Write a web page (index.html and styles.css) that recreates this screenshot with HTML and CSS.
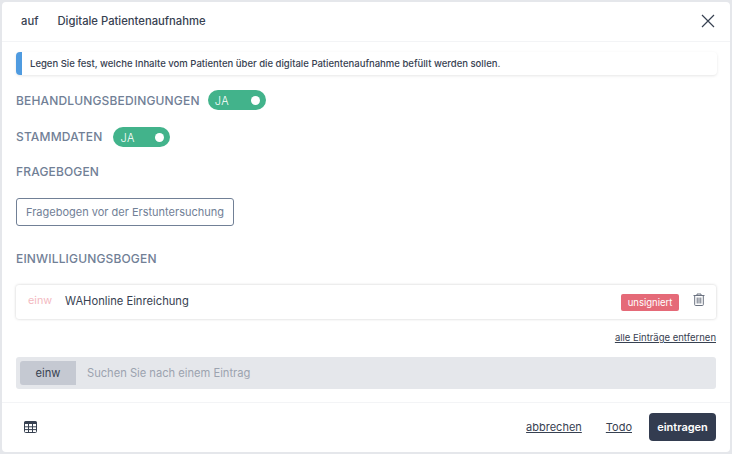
FILE: index.html
```html
<!DOCTYPE html>
<html lang="de">
<head>
<meta charset="utf-8">
<title>Digitale Patientenaufnahme</title>
<link rel="stylesheet" href="styles.css">
</head>
<body>
<div class="modal">
  <header class="head">
    <span class="head-code">auf</span>
    <span class="head-title">Digitale Patientenaufnahme</span>
    <svg class="close" width="14" height="14" viewBox="0 0 14 14"><path d="M1 1l12 12M13 1L1 13" stroke="#374151" stroke-width="1.2" fill="none"/></svg>
  </header>
  <main class="body">
    <div class="notice">Legen Sie fest, welche Inhalte vom Patienten über die digitale Patientenaufnahme befüllt werden sollen.</div>
    <div class="row row-first"><span class="label">BEHANDLUNGSBEDINGUNGEN</span><span class="toggle toggle-wide">JA<i class="knob"></i></span></div>
    <div class="row row-second"><span class="label">STAMMDATEN</span><span class="toggle toggle-narrow">JA<i class="knob"></i></span></div>
    <div class="row row-third"><span class="label">FRAGEBOGEN</span></div>
    <button class="outline">Fragebogen vor der Erstuntersuchung</button>
    <div class="row row-fourth"><span class="label">EINWILLIGUNGSBOGEN</span></div>
    <div class="entry">
      <span class="entry-code">einw</span>
      <span class="entry-name">WAHonline Einreichung</span>
      <span class="badge">unsigniert</span>
      <svg class="trash" width="12" height="13" viewBox="0 0 12 13" fill="none" stroke="#6b7280" stroke-width="1"><path d="M.5 2.5h11M4 2.5V1h4v1.5M1.7 2.5v9.2c0 .5.3.8.8.8h7c.5 0 .8-.3.8-.8V2.5M4.2 4.5v6M6 4.5v6M7.8 4.5v6"/></svg>
    </div>
    <div class="remove-wrap"><a class="remove" href="#">alle Einträge entfernen</a></div>
    <div class="search"><span class="search-tag">einw</span><span class="search-hint">Suchen Sie nach einem Eintrag</span></div>
  </main>
  <footer class="foot">
    <svg class="table-icon" width="13" height="12" viewBox="0 0 13 12"><path d="M1.5 0h10A1.5 1.5 0 0 1 13 1.5V3H0V1.5A1.5 1.5 0 0 1 1.5 0z" fill="#374151"/><path d="M.5 3v7.5a1 1 0 0 0 1 1h10a1 1 0 0 0 1-1V3M0 5.8h13M0 8.6h13M4.5 3v8.5M8.5 3v8.5" fill="none" stroke="#374151"/></svg>
    <span class="spacer"></span>
    <a class="link" href="#">abbrechen</a>
    <a class="link link-todo" href="#">Todo</a>
    <button class="primary">eintragen</button>
  </footer>
</div>
</body>
</html>
```
FILE: styles.css
```css
* { box-sizing: border-box; }
html, body { margin: 0; height: 100%; }
body {
  background: #e5e7eb;
  padding: 2px;
  font-family: Inter, "Noto Sans", sans-serif;
  color: #374151;
}
.modal {
  width: 728px;
  height: 450px;
  background: #fff;
  border-radius: 4px;
  display: flex;
  flex-direction: column;
}
.head {
  height: 40px;
  flex: none;
  display: flex;
  align-items: center;
  padding: 0 15px 1px 19px;
  border-bottom: 1px solid #f3f4f6;
  font-size: 11.25px;
  font-weight: 500;
}
.head-code { width: 36.5px; }
.head-title { flex: 1; }
.body { flex: 1; padding: 10px 14px 0; }
.notice {
  height: 23px;
  width: 701px;
  border-left: 6px solid #4f9be0;
  border-radius: 4px;
  box-shadow: 0 1px 3px rgba(0,0,0,.1);
  padding-left: 8px;
  line-height: 23px;
  font-size: 9.52px;
  font-weight: 500;
}
.row { display: flex; align-items: center; gap: 8px; }
.row-first { margin-top: 15px; height: 20px; }
.row-second { margin-top: 16px; height: 20px; }
.row-third { margin-top: 15px; height: 20px; }
.row-fourth { margin-top: 22px; height: 20px; }
.label { font-size: 12px; font-weight: 500; color: #718096; letter-spacing: .16px; }
.toggle {
  position: relative;
  width: 58px;
  height: 20px;
  border-radius: 10px;
  background: #42b38b;
  color: #fff;
  font-size: 11px;
  font-weight: 300;
  line-height: 22px;
  padding-left: 7px;
  letter-spacing: .6px;
}
.toggle-narrow { width: 57px; margin: 2px 0 0 3px; }
.knob {
  position: absolute;
  right: 6px;
  top: 6px;
  width: 9px;
  height: 9px;
  border-radius: 50%;
  background: #fff;
}
.outline {
  display: block;
  margin-top: 17px;
  height: 28px;
  width: 218px;
  padding: 0;
  background: #fff;
  border: 1px solid #718096;
  border-radius: 3px;
  font: 400 11px Inter, sans-serif;
  color: #718096;
}
.entry {
  margin-top: 17px;
  height: 34px;
  width: 700px;
  display: flex;
  align-items: center;
  border-radius: 3px;
  box-shadow: 0 0 3px rgba(0,0,0,.2);
  padding: 0 11px 0 12px;
  font-size: 11.2px;
}
.entry-code { width: 37px; color: #f3b9bf; margin-bottom: 3px; font-size: 10.8px; }
.entry-name { flex: 1; margin-bottom: 3px; }
.badge {
  width: 58px;
  height: 17px;
  border-radius: 2px;
  background: #e56a78;
  color: #fff;
  text-align: center;
  line-height: 17px;
  font-size: 9.5px;
}
.trash { margin-left: 14px; margin-top: -6px; }
.remove-wrap { width: 700px; text-align: right; margin-top: 9px; height: 14px; line-height: 14px; }
.remove { font-size: 9.5px; color: #374151; }
.search {
  margin-top: 15px;
  height: 32px;
  width: 700px;
  display: flex;
  align-items: center;
  background: #e5e7eb;
  border-radius: 3px;
  padding-left: 4px;
  font-size: 11.15px;
}
.search-tag {
  width: 56px;
  height: 24px;
  line-height: 24px;
  text-align: center;
  background: #c5c9d2;
  border-radius: 3px 0 0 3px;
}
.search-hint { margin-left: 11px; color: #9ca3af; }
.foot {
  height: 50px;
  flex: none;
  display: flex;
  align-items: center;
  padding: 0 14px 2px 22px;
  border-top: 1px solid #f3f4f6;
  font-size: 11px;
}
.spacer { flex: 1; }
.link { color: #374151; }
.link-todo { margin-left: 24px; margin-right: 1px; }
.primary {
  margin-left: 16px;
  width: 67px;
  height: 28px;
  padding: 0;
  border: 0;
  border-radius: 4px;
  background: #333c50;
  color: #fff;
  font: 600 11px Inter, sans-serif;
}
```
